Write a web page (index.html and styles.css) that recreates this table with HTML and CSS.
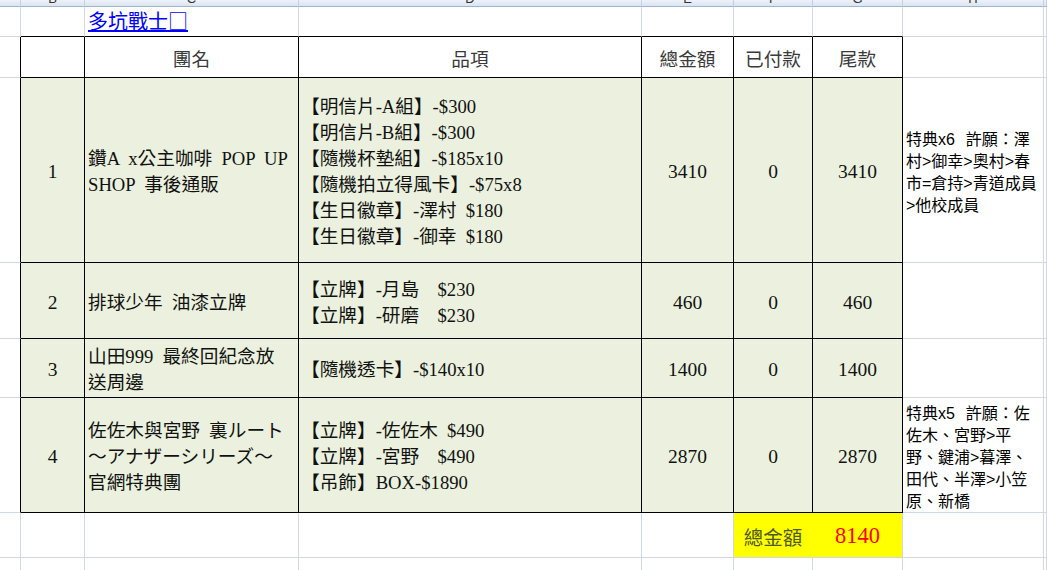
FILE: index.html
```
<!DOCTYPE html>
<html lang="zh-Hant">
<head>
<meta charset="utf-8">
<title>多坑戰士</title>
<link rel="stylesheet" href="styles.css">
</head>
<body>
<div class="sheet">
  <!-- column header strip -->
  <div class="ch"></div>
  <div class="ch"><span>B</span></div>
  <div class="ch"><span>C</span></div>
  <div class="ch"><span>D</span></div>
  <div class="ch"><span>E</span></div>
  <div class="ch"><span>F</span></div>
  <div class="ch"><span>G</span></div>
  <div class="ch"><span>H</span></div>
  <div class="ch"></div>

  <!-- row 1: title -->
  <div class="c"></div>
  <div class="c topb"></div>
  <div class="c topb title"><a href="#">多坑戰士□</a></div>
  <div class="c topb"></div>
  <div class="c topb"></div>
  <div class="c topb"></div>
  <div class="c topb"></div>
  <div class="c"></div>
  <div class="c"></div>

  <!-- row 2: header -->
  <div class="c edge"></div>
  <div class="c t th"></div>
  <div class="c t th"><div>團名</div></div>
  <div class="c t th"><div>品項</div></div>
  <div class="c t th"><div>總金額</div></div>
  <div class="c t th"><div>已付款</div></div>
  <div class="c t th"><div>尾款</div></div>
  <div class="c"></div>
  <div class="c"></div>

  <!-- data row 1 -->
  <div class="c edge"></div>
  <div class="c t g ctr num"><div>1</div></div>
  <div class="c t g txt"><div>鑽A x公主咖啡 POP UP
SHOP 事後通販</div></div>
  <div class="c t g items"><div>【明信片-A組】-$300
【明信片-B組】-$300
【隨機杯墊組】-$185x10
【隨機拍立得風卡】-$75x8
【生日徽章】-澤村 $180
【生日徽章】-御幸 $180</div></div>
  <div class="c t g ctr num"><div>3410</div></div>
  <div class="c t g ctr num"><div>0</div></div>
  <div class="c t g ctr num"><div>3410</div></div>
  <div class="c note"><div>特典x6  許願：澤
村&gt;御幸&gt;奧村&gt;春
市=倉持&gt;青道成員
&gt;他校成員</div></div>
  <div class="c"></div>

  <!-- data row 2 -->
  <div class="c edge"></div>
  <div class="c t g ctr num"><div>2</div></div>
  <div class="c t g txt"><div>排球少年 油漆立牌</div></div>
  <div class="c t g items"><div>【立牌】-月島  $230
【立牌】-研磨  $230</div></div>
  <div class="c t g ctr num"><div>460</div></div>
  <div class="c t g ctr num"><div>0</div></div>
  <div class="c t g ctr num"><div>460</div></div>
  <div class="c"></div>
  <div class="c"></div>

  <!-- data row 3 -->
  <div class="c edge"></div>
  <div class="c t g ctr num"><div>3</div></div>
  <div class="c t g txt"><div>山田999 最終回紀念放
送周邊</div></div>
  <div class="c t g items"><div>【隨機透卡】-$140x10</div></div>
  <div class="c t g ctr num"><div>1400</div></div>
  <div class="c t g ctr num"><div>0</div></div>
  <div class="c t g ctr num"><div>1400</div></div>
  <div class="c"></div>
  <div class="c"></div>

  <!-- data row 4 -->
  <div class="c edge"></div>
  <div class="c t g ctr num"><div>4</div></div>
  <div class="c t g txt"><div>佐佐木與宮野 裏ルート
～アナザーシリーズ～
官網特典團</div></div>
  <div class="c t g items"><div>【立牌】-佐佐木 $490
【立牌】-宮野  $490
【吊飾】BOX-$1890</div></div>
  <div class="c t g ctr num"><div>2870</div></div>
  <div class="c t g ctr num"><div>0</div></div>
  <div class="c t g ctr num"><div>2870</div></div>
  <div class="c note"><div>特典x5  許願：佐
佐木、宮野&gt;平
野、鍵浦&gt;暮澤、
田代、半澤&gt;小笠
原、新橋</div></div>
  <div class="c"></div>

  <!-- total row -->
  <div class="c"></div>
  <div class="c"></div>
  <div class="c"></div>
  <div class="c"></div>
  <div class="c"></div>
  <div class="c yellow joined ctr total-label"><div>總金額</div></div>
  <div class="c yellow ctr total"><div>8140</div></div>
  <div class="c"></div>
  <div class="c"></div>

  <!-- trailing row -->
  <div class="c"></div>
  <div class="c"></div>
  <div class="c"></div>
  <div class="c"></div>
  <div class="c"></div>
  <div class="c"></div>
  <div class="c"></div>
  <div class="c"></div>
  <div class="c"></div>
</div>
</body>
</html>
```

FILE: styles.css
```
html, body {
  margin: 0;
  padding: 0;
  background: #ffffff;
}

body {
  width: 1047px;
  height: 570px;
  overflow: hidden;
}

.sheet {
  display: grid;
  grid-template-columns: 21px 64px 214px 343px 92px 79px 90px 141px 1fr;
  grid-template-rows: 7px 30px 41px 185px 76px 59px 115px 45px 40px;
  font-family: "Liberation Serif", "Noto Sans CJK TC", serif;
  font-size: 18.67px;
  color: #111111;
}

/* column header strip */
.ch {
  box-sizing: border-box;
  background: linear-gradient(#eef3fa, #dbe4f0);
  border-right: 1px solid #c3d1e3;
  border-bottom: 1px solid #9eb6ce;
  overflow: hidden;
  display: flex;
  justify-content: center;
  align-items: flex-end;
  padding-bottom: 1px;
  font-family: "Liberation Sans", sans-serif;
  font-size: 13px;
  line-height: 13px;
  color: #333333;
}

/* generic cell with gridlines */
.c {
  box-sizing: border-box;
  border-right: 1px solid #d0d7e5;
  border-bottom: 1px solid #d0d7e5;
  display: flex;
  align-items: center;
  min-width: 0;
}

.t {
  border-right-color: #000000;
  border-bottom-color: #000000;
}

.edge {
  border-right-color: #000000;
}

.topb {
  border-bottom-color: #000000;
}

.g {
  background: #ebf1de;
  padding-top: 4px;
}

.ctr {
  justify-content: center;
}

.th {
  justify-content: center;
  color: #3a3a3a;
  padding-top: 1px;
}

.num {
  font-size: 19.5px;
}

.txt {
  padding-left: 3px;
  line-height: 26px;
  white-space: pre;
  word-spacing: 4.5px;
}

.items {
  padding-left: 2px;
  line-height: 26px;
  white-space: pre;
  word-spacing: 4.5px;
}

.note {
  padding-left: 3px;
  padding-top: 6px;
  font-family: "Liberation Sans", "Noto Sans CJK TC", sans-serif;
  font-size: 16px;
  line-height: 22px;
  white-space: pre;
  word-spacing: 1px;
  color: #000000;
}

.title {
  align-items: flex-end;
  padding-left: 3px;
  padding-bottom: 3px;
}

.title a {
  color: #0000ff;
  text-decoration: underline;
  font-family: "Noto Sans CJK TC", sans-serif;
  font-size: 20px;
  line-height: 24px;
}

.yellow {
  background: #ffff00;
}

.joined {
  border-right-color: #ffff00;
}

.total-label {
  color: #4f5a1e;
  font-size: 19.5px;
  padding-top: 2px;
}

.total {
  color: #ff0000;
  font-size: 22.5px;
  padding-top: 2px;
}
```
